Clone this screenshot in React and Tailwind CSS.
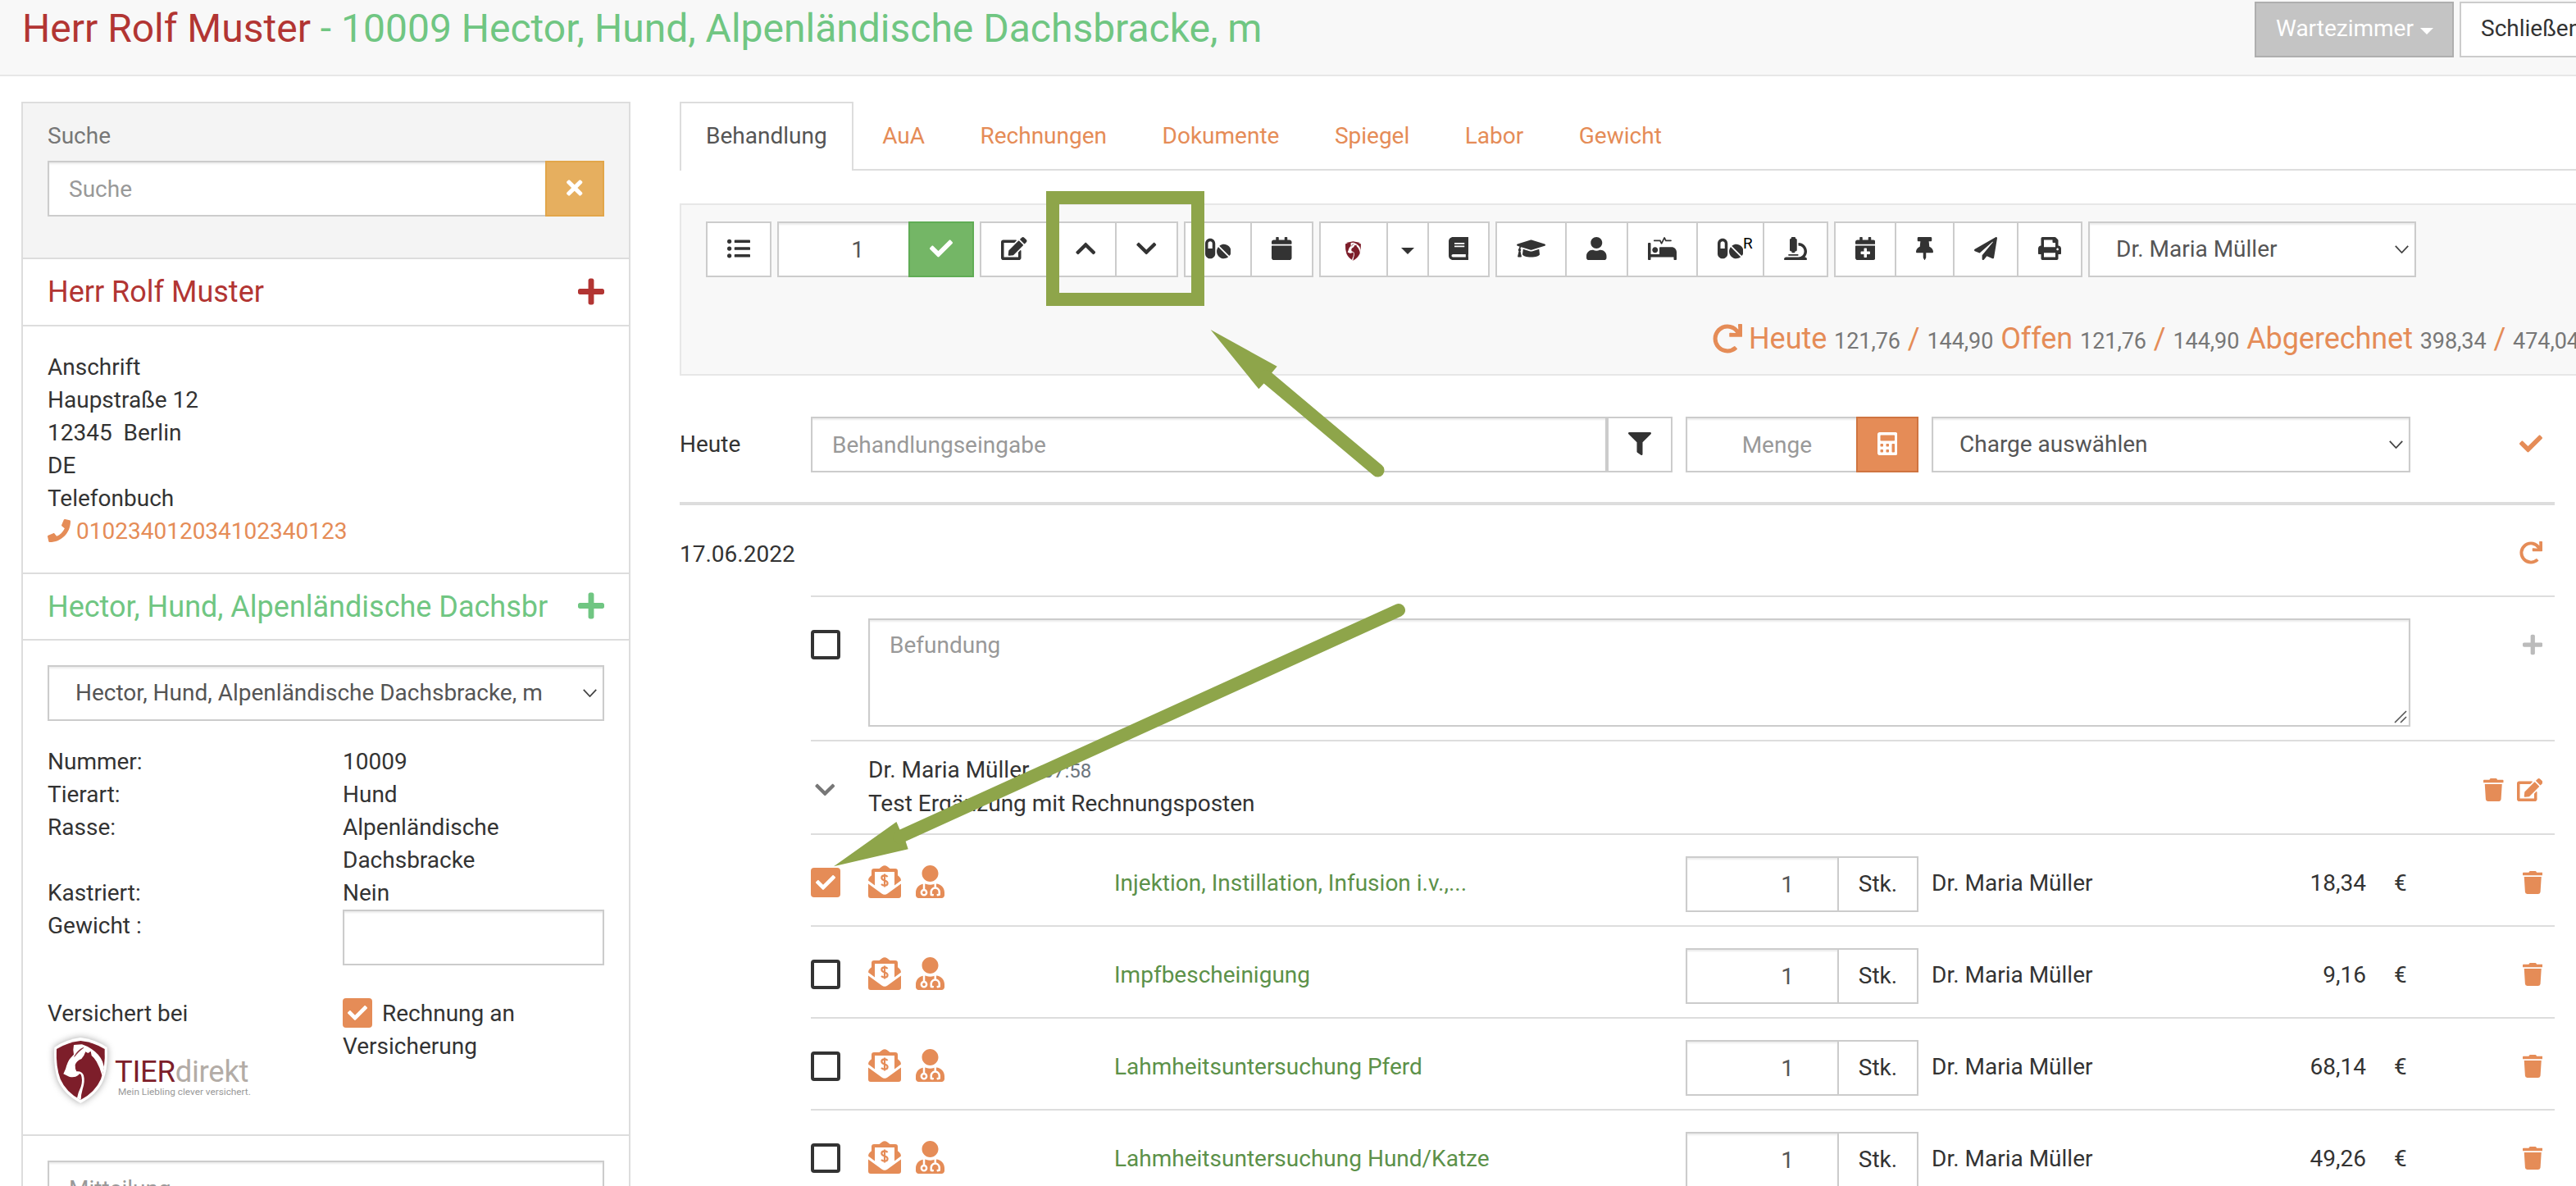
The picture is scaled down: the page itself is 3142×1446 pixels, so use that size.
import {
  FaListUl, FaCheck, FaEdit, FaChevronUp, FaChevronDown, FaPills, FaCalendar, FaBook,
  FaGraduationCap, FaUser, FaProcedures, FaMicroscope, FaCalendarPlus, FaThumbtack,
  FaPaperPlane, FaPrint, FaTimes, FaPlus, FaPhone, FaFilter, FaCalculator, FaTrash, FaUserMd, FaRedo,
} from "react-icons/fa";

// Icon glyphs are 28px tall; their width follows the glyph's own proportions.
const w21 = "block h-7 w-[21px] shrink-0";
const w24 = "block h-7 w-[24.5px] shrink-0";
const w28 = "block h-7 w-7 shrink-0";
const w31 = "block h-7 w-[31.5px] shrink-0";
const w35 = "block h-7 w-[35px] shrink-0";

const field = "border-2 border-[#ccc] bg-white shadow-[inset_0_2px_2px_rgba(0,0,0,0.075)] h-[68px]";

function Arrow() {
  return (
    <svg viewBox="0 0 17 10" className="h-[10px] w-[17px] shrink-0 fill-none stroke-[#444]" strokeWidth="1.8">
      <path d="M.8 .8 8.5 9 16.2 .8" />
    </svg>
  );
}

function Select({ children, className = "" }) {
  return (
    <div className={field + " flex items-center justify-between pl-8 pr-[7px] text-[#555] " + className}>
      <span>{children}</span>
      <Arrow />
    </div>
  );
}

function Btn({ children, first, className = "px-6" }) {
  return (
    <div className={"flex h-[68px] items-center border-2 border-[#ccc] bg-white pb-[3px] " + (first ? "" : "-ml-[2px] ") + className}>
      {children}
    </div>
  );
}

function Group({ icons }) {
  return (
    <div className="flex">
      {icons.map(([I, size], i) => (
        <Btn key={i} first={i === 0}><I className={size} /></Btn>
      ))}
    </div>
  );
}

function Checkbox({ checked }) {
  return checked ? (
    <span className="flex size-9 shrink-0 items-center justify-center rounded-[4px] bg-[#e58c57] text-white">
      <FaCheck className="size-6" />
    </span>
  ) : (
    <span className="block size-9 shrink-0 rounded-[4px] border-4 border-[#333] bg-white" />
  );
}

function Shield({ className }) {
  return (
    <svg viewBox="0 0 195 240" className={className}>
      <path d="M97 0Q150 6 194 36 198 110 180 156 158 208 97 240 36 208 14 156-3 110 1 36 45 6 97 0Z" fill="#fff" />
      <path d="M97 12Q145 17 185 42 188 108 171 152 150 200 97 228 44 200 23 152 6 108 9 42 50 17 97 12Z" fill="#7d1e2a" />
      <path d="M72 27 102 25Q118 30 137 42 165 60 177 88L183 108 176 140Q168 110 155 88 145 72 137 66L134 50 124 57 115 52Q110 68 100 78 82 85 77 100 76 115 82 124 102 122 108 138 114 160 104 190 98 210 98 228L84 221Q88 200 98 180 106 155 98 135 92 130 88 138 75 148 55 143L34 133 42 115Q50 85 60 75L72 62Q68 45 72 27Z" fill="#fff" />
      <path d="M74 70Q86 45 108 37 92 48 74 70Z" fill="#7d1e2a" stroke="#7d1e2a" strokeWidth="2" />
    </svg>
  );
}

function MoneyMail() {
  return (
    <svg viewBox="0 0 40 40" className="block size-10 shrink-0 fill-[#e58c57]">
      <path d="M0 22.5 16.5 34.5Q20 37 23.5 34.5L40 22.5V37Q40 40 37 40H3Q0 40 0 37Z" />
      <path d="M0 18.5Q0 15.5 2 14L4 12.3V7Q4 4 7 4H13.5L17 1.3Q20-1 23 1.3L26.5 4H33Q36 4 36 7V12.3L38 14Q40 15.500 40 18.500L32 24.500V8H8V24.500Z" />
      <path d="M23.6 13.9C22.6 12.8 21.4 12.4 20 12.4c-2.300 0-3.700 1.200-3.700 2.900 0 4 7.300 2.400 7.300 6.400 0 1.800-1.500 3-3.600 3-1.600 0-3-.600-4-1.700M20 10.500v16" fill="none" stroke="#e58c57" strokeWidth="2.200" />
    </svg>
  );
}

const details = [
  ["Nummer:", "10009"],
  ["Tierart:", "Hund"],
  ["Rasse:", "Alpenländische Dachsbracke"],
  ["Kastriert:", "Nein"],
];

const items = [
  { name: "Injektion, Instillation, Infusion i.v.,...", price: "18,34", checked: true },
  { name: "Impfbescheinigung", price: "9,16" },
  { name: "Lahmheitsuntersuchung Pferd", price: "68,14" },
  { name: "Lahmheitsuntersuchung Hund/Katze", price: "49,26" },
];

function Sidebar() {
  return (
    <aside className="mt-[31px] ml-[26px] h-[1400px] w-[743px] shrink-0 border-2 border-[#ddd]">
      <div className="h-[190px] border-b-2 border-[#ddd] bg-[#f4f4f4] px-[30px] pt-5">
        <div className="text-[#777]">Suche</div>
        <div className="mt-[10px] flex">
          <div className={field + " grow border-r-0 pl-6 leading-[66px] text-[#999]"}>Suche</div>
          <div className="flex h-[68px] w-[72px] items-center justify-center border-2 border-[#e2a64a] bg-[#e6af5f] pb-[3px] text-white">
            <FaTimes className="h-7 w-[19.5px]" />
          </div>
        </div>
      </div>
      <div className="flex h-[82px] items-center justify-between border-b-2 border-[#ddd] px-[30px] text-[36px] leading-10 text-[#b23533]">
        <span>Herr Rolf Muster</span>
        <FaPlus className="h-[37px] w-[32px] -translate-y-px" />
      </div>
      <div className="h-[302px] border-b-2 border-[#ddd] px-[30px] pt-[30px]">
        <div>Anschrift</div>
        <div>Haupstraße 12</div>
        <div className="whitespace-pre">12345  Berlin</div>
        <div>DE</div>
        <div>Telefonbuch</div>
        <div className="flex items-center gap-[7px] text-[#e58c57]">
          <FaPhone className="size-7 -translate-y-px" />
          <span>010234012034102340123</span>
        </div>
      </div>
      <div className="flex h-[81px] items-center justify-between border-b-2 border-[#ddd] px-[30px] text-[36px] leading-10 text-[#70c682]">
        <span className="whitespace-nowrap">Hector, Hund, Alpenländische Dachsbr</span>
        <FaPlus className="h-[37px] w-[32px] -translate-y-px" />
      </div>
      <div className="h-[604px] border-b-2 border-[#ddd] px-[30px] pt-[30px]">
        <Select>Hector, Hund, Alpenländische Dachsbracke, m</Select>
        <div className="mt-[30px] grid grid-cols-[360px_319px]">
          {details.map(([k, v]) => (
            <div key={k} className="contents">
              <div>{k}</div>
              <div className="w-[240px]">{v}</div>
            </div>
          ))}
          <div>Gewicht :</div>
          <div className={field} />
          <div className="mt-[39px]">
            <div>Versichert bei</div>
            <div className="flex">
              <Shield className="mt-[9px] ml-2 h-[80px] w-[65px] drop-shadow-[0_0_4px_rgba(0,0,0,0.35)]" />
              <div className="ml-[9px] pt-[33px]">
                <div className="flex h-9 text-[36.5px] leading-9 tracking-[-0.3px]">
                  <span className="text-[#7d1e2a]">TIER</span>
                  <span className="text-[#b3aca6]">direkt</span>
                </div>
                <div className="ml-1 text-[11.8px] leading-3 whitespace-nowrap text-[#999]">Mein Liebling clever versichert.</div>
              </div>
            </div>
          </div>
          <div className="mt-[39px]">
            <div className="flex items-start gap-3">
              <span className="mt-px"><Checkbox checked /></span>
              <span>Rechnung an</span>
            </div>
            <div>Versicherung</div>
          </div>
        </div>
      </div>
      <div className="px-[30px] pt-[30px]">
        <div className={field + " pl-6 leading-[66px] text-[#999]"}>Mitteilung</div>
      </div>
    </aside>
  );
}

function Toolbar() {
  return (
    <div className="mt-10 h-[210px] w-[2320px] border-2 border-[#e7e7e7] bg-[#f8f8f8] pt-5 pl-[30px]">
      <div className="flex gap-[7px] text-[#333]">
        <Group icons={[[FaListUl, w28]]} />
        <div className="flex">
          <div className={field + " w-[160px] border-r-0 pr-[54px] text-right leading-[66px] text-[#555]"}>1</div>
          <div className="flex w-20 items-center justify-center border-2 border-[#60ac55] bg-[#74b666] pb-[3px] text-white">
            <FaCheck className="size-7" />
          </div>
        </div>
        <Group icons={[[FaEdit, w31]]} />
        <Group icons={[[FaChevronUp, w24], [FaChevronDown, w24]]} />
        <Group icons={[[FaPills, w31], [FaCalendar, w24]]} />
        <div className="flex">
          <Btn first className="w-[84px] justify-center pt-[3px]">
            <Shield className="mt-[3px] h-[26px] w-[21px]" />
          </Btn>
          <Btn className="w-[52px] justify-center pt-[3px]">
            <span className="mt-1 border-x-8 border-t-8 border-x-transparent border-t-[#333]" />
          </Btn>
          <Btn><FaBook className={w24} /></Btn>
        </div>
        <div className="flex">
          <Btn first><FaGraduationCap className={w35} /></Btn>
          <Btn><FaUser className={w24} /></Btn>
          <Btn><FaProcedures className={w35} /></Btn>
          <Btn className="w-[83px] pl-6">
            <FaPills className={w31} />
            <span className="-mt-[12px] text-[19px] leading-5 text-black">R</span>
          </Btn>
          <Btn><FaMicroscope className={w28} /></Btn>
        </div>
        <Group icons={[[FaCalendarPlus, w24], [FaThumbtack, w21], [FaPaperPlane, w28], [FaPrint, w28]]} />
        <Select className="w-[400px]">Dr. Maria Müller</Select>
      </div>
      <div className="mt-[54px] ml-[1228px] flex items-baseline text-[36px] tracking-[-0.06px] whitespace-nowrap text-[#e58c57]">
        <FaRedo className="mr-[8px] size-9 translate-y-[3px] self-start" />
        <span className="translate-y-px">
          Heute <Num>121,76</Num> / <Num>144,90</Num> Offen <Num>121,76</Num> / <Num>144,90</Num> Abgerechnet <Num>398,34</Num> / <Num>474,04</Num>
        </span>
      </div>
    </div>
  );
}

function Num({ children }) {
  return <span className="text-[27px] text-[#777]">{children}</span>;
}

function Entries() {
  return (
    <div className="w-[2287px]">
      <div className="flex h-[158px] border-b-4 border-[#ddd] pt-[50px]">
        <div className="w-40 pt-[14px]">Heute</div>
        <div className={field + " w-[971px] pl-6 leading-[66px] text-[#999]"}>Behandlungseingabe</div>
        <Btn first className="mr-4 w-20 justify-center"><FaFilter className={w28} /></Btn>
        <div className={field + " w-[208px] border-r-0 pr-[54px] text-right leading-[66px] text-[#999]"}>Menge</div>
        <div className="mr-4 flex h-[68px] w-[76px] items-center justify-center border-2 border-[#cf7440] bg-[#e58c57] pb-[3px] text-white">
          <FaCalculator className={w24} />
        </div>
        <Select className="w-[584px]">Charge auswählen</Select>
        <FaCheck className="mt-[19px] ml-auto mr-[15px] size-7 text-[#e58c57]" />
      </div>
      <div className="flex h-[110px] items-start justify-between pt-[40px] pr-[15px]">
        <span>17.06.2022</span>
        <FaRedo className="mt-1 size-7 text-[#e58c57]" />
      </div>
      <div className="ml-40">
        <div className="flex h-[176px] border-t-2 border-[#ddd] pt-[26px] pr-[15px]">
          <div className="w-[70px] pt-[14px]"><Checkbox /></div>
          <div className="relative h-[132px] w-[1881px] border-2 border-[#ccc] pt-[11px] pl-6 text-[#999] shadow-[inset_0_2px_2px_rgba(0,0,0,0.075)]">
            Befundung
            <svg viewBox="0 0 16 16" className="absolute right-[2px] bottom-[2px] size-4 stroke-[#555]" strokeWidth="1.600">
              <path d="M1 15 15 1M8 15 15 8" />
            </svg>
          </div>
          <FaPlus className="mt-[18px] ml-auto h-7 w-[24.5px] text-[#bbb]" />
        </div>
        <div className="flex h-[114px] border-t-2 border-[#ddd] pr-[15px]">
          <div className="w-[70px] pt-[45px] pl-[5px]"><FaChevronDown className="block h-7 w-[24.5px] text-[#777]" /></div>
          <div className="pt-[15px]">
            <div>Dr. Maria Müller<span className="ml-4 text-[24px] text-[#6c757d]">07:58</span></div>
            <div>Test Ergänzung mit Rechnungsposten</div>
          </div>
          <div className="mt-[45px] ml-auto flex gap-4 text-[#e58c57]">
            <FaTrash className={w24} />
            <FaEdit className={w31} />
          </div>
        </div>
        {items.map((it) => (
          <div key={it.name} className="flex h-[112px] border-t-2 border-[#ddd] pt-[26px] pr-[15px]">
            <div className="mt-[14px] w-[70px]"><Checkbox checked={it.checked} /></div>
            <div className="mt-[11px] flex w-[300px] gap-[18px] text-[#e58c57]">
              <MoneyMail />
              <FaUserMd className="block h-10 w-[35px]" />
            </div>
            <div className="w-[697px] pt-[13px] text-[#5c9149]">{it.name}</div>
            <div className={field + " w-[187px] pr-[53px] text-right leading-[66px] text-[#555]"}>1</div>
            <div className="-ml-[2px] mr-4 h-[68px] w-[99px] border-2 border-[#ccc] text-center leading-[63px]">Stk.</div>
            <div className="w-[400px] pt-[13px]">Dr. Maria Müller</div>
            <div className="w-[130px] pt-[13px] text-right">{it.price}</div>
            <div className="ml-[34px] pt-[13px]">€</div>
            <FaTrash className="mt-[18px] ml-auto block h-7 w-[24.5px] text-[#e58c57]" />
          </div>
        ))}
      </div>
    </div>
  );
}

const tabs = ["AuA", "Rechnungen", "Dokumente", "Spiegel", "Labor", "Gewicht"];

export default function App() {
  return (
    <div className="relative h-[1446px] w-[3142px] overflow-hidden bg-white font-[Roboto,sans-serif] text-[28px] leading-10 text-[#333]">
      <header className="flex h-[93px] border-b-2 border-[#e7e7e7] bg-[#f8f8f8] pl-[27px]">
        <div className="text-[48px] leading-[70px] whitespace-nowrap text-[#70c682]">
          <span className="text-[#b23533]">Herr Rolf Muster</span> - 10009 Hector, Hund, Alpenländische Dachsbracke, m
        </div>
        <div className="mt-[2px] ml-auto flex h-[68px] gap-[7px]">
          <div className="flex w-[243px] items-center gap-2 border-2 border-[#aeaeae] bg-[#c4c4c4] pb-[2px] pl-6 text-white">
            Wartezimmer
            <span className="mt-[6px] border-x-8 border-t-8 border-x-transparent border-t-white" />
          </div>
          <div className="w-[142px] border-2 border-r-0 border-[#ccc] bg-white pl-6 leading-[62px] whitespace-nowrap">Schließen</div>
        </div>
      </header>
      <div className="flex">
        <Sidebar />
        <main className="ml-[60px] w-[2313px] pt-[31px]">
          <div className="flex h-[84px] border-b-2 border-[#ddd]">
            <div className="-mb-[2px] border-2 border-b-0 border-[#ddd] bg-white px-[30px] pt-[20px] text-[#555]">Behandlung</div>
            {tabs.map((t) => (
              <div key={t} className="ml-[3.5px] px-8 pt-[22px] text-[#e58c57]">{t}</div>
            ))}
          </div>
          <Toolbar />
          <Entries />
        </main>
      </div>
      <div className="absolute top-[233px] left-[1276px] h-[140px] w-[193px] border-16 border-[#8ea54a]" />
      <svg viewBox="0 0 3142 1446" className="absolute top-0 left-0 h-[1446px] w-[3142px] fill-[#8ea54a] stroke-[#8ea54a]">
        <path d="M1476.600 402 1557.700 446.700 1551 454.700 1541.800 467.300 1535.300 474.300ZM1017 1056.300 1093.400 1002 1097.400 1011.300 1104.600 1025.700 1107.700 1035.300Z" stroke="none" />
        <path d="M1544 459 1680.500 573.500M1097 1020.500 1706 744" strokeWidth="16" strokeLinecap="round" />
      </svg>
    </div>
  );
}
